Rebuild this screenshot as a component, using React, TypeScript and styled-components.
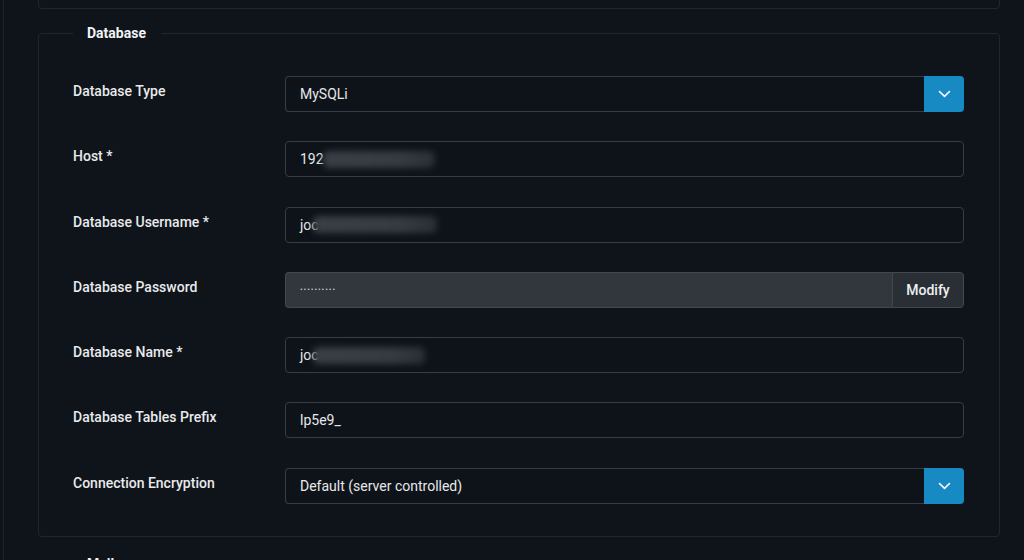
import React from "react";
import styled, { createGlobalStyle } from "styled-components";

const GlobalStyle = createGlobalStyle`
  html, body {
    margin: 0;
    padding: 0;
    background: #0f141a;
    overflow: hidden;
  }
  body {
    font-family: Roboto, "Liberation Sans", Arial, sans-serif;
    color: #e6e8ea;
  }
`;

type Field = {
  label: string;
  kind: "select" | "text" | "password";
  value: string;
  blur?: number;
  overlap?: number;
};

const fields: Field[] = [
  { label: "Database Type", kind: "select", value: "MySQLi" },
  { label: "Host *", kind: "text", value: "192", blur: 112 },
  { label: "Database Username *", kind: "text", value: "joc", blur: 124, overlap: 6 },
  { label: "Database Password", kind: "password", value: "••••••••••" },
  { label: "Database Name *", kind: "text", value: "joc", blur: 112, overlap: 6 },
  { label: "Database Tables Prefix", kind: "text", value: "lp5e9_" },
  { label: "Connection Encryption", kind: "select", value: "Default (server controlled)" },
];

const Chevron = () => (
  <svg width="13" height="8" viewBox="0 0 13 8" fill="none">
    <path d="M1.5 1.5L6.5 6.3L11.5 1.5" stroke="#fff" strokeWidth="1.6" strokeLinecap="round" strokeLinejoin="round" />
  </svg>
);

export default function App() {
  return (
    <>
      <GlobalStyle />
      <Page>
        <PrevFieldset />
        <Fieldset>
          <Legend>Database</Legend>
          <Grid>
            {fields.map((f) => (
              <React.Fragment key={f.label}>
                <Label>{f.label}</Label>
                {f.kind === "select" && (
                  <Group>
                    <Control $joined>{f.value}</Control>
                    <DropButton>
                      <Chevron />
                    </DropButton>
                  </Group>
                )}
                {f.kind === "text" && (
                  <Control>
                    {f.value}
                    {f.blur ? (
                      <Blur style={{ width: f.blur, marginLeft: -(f.overlap ?? 1) }} />
                    ) : null}
                  </Control>
                )}
                {f.kind === "password" && (
                  <Group>
                    <Control $joined $disabled>
                      <Dots>{f.value}</Dots>
                    </Control>
                    <ModifyButton>Modify</ModifyButton>
                  </Group>
                )}
              </React.Fragment>
            ))}
          </Grid>
        </Fieldset>
        <Fieldset $next>
          <Legend>Mail</Legend>
          <Spacer />
        </Fieldset>
      </Page>
    </>
  );
}

const Page = styled.div`
  display: flow-root;
  margin-left: 3px;
  border-left: 1px solid #1b222a;
  padding: 0 24px 0 34px;
  height: 100vh;
  overflow: hidden;
  box-sizing: border-box;
`;

const PrevFieldset = styled.div`
  margin-top: -32px;
  height: 41px;
  border: 1px solid #1f262e;
  border-radius: 4px;
  box-sizing: border-box;
`;

const Fieldset = styled.fieldset<{ $next?: boolean }>`
  margin: ${(p) => (p.$next ? "19px 0 0" : "16px 0 0")};
  padding: 0 35px 32px 34px;
  border: 1px solid #1f262e;
  border-radius: 4px;
  min-width: 0;
`;

const Legend = styled.legend`
  padding: 0 15px 0 14px;
  font-size: 14px;
  line-height: 16px;
  font-weight: 700;
  color: #f1f3f5;
`;

const Spacer = styled.div`
  height: 60px;
`;

const Grid = styled.div`
  display: grid;
  grid-template-columns: 212px 1fr;
  row-gap: 29.3px;
  padding-top: 35px;
`;

const Label = styled.div`
  font-size: 14px;
  line-height: 20px;
  font-weight: 500;
  color: #e8eaec;
  padding-top: 5px;
`;

const Group = styled.div`
  display: flex;
  height: 36px;
`;

const Control = styled.div<{ $joined?: boolean; $disabled?: boolean }>`
  flex: 1;
  display: flex;
  align-items: center;
  height: 36px;
  box-sizing: border-box;
  padding: 0 14px;
  font-size: 14px;
  color: #e6e8ea;
  background: ${(p) => (p.$disabled ? "#31373d" : "#0e1319")};
  border: 1px solid ${(p) => (p.$disabled ? "#41484f" : "#363d45")};
  border-radius: ${(p) => (p.$joined ? "4px 0 0 4px" : "4px")};
  ${(p) => (p.$joined ? "border-right: none;" : "")}
`;

const Blur = styled.span`
  display: inline-block;
  height: 17px;
  background: linear-gradient(to right, #3a3f46 0%, #363b42 70%, #2a2f36 100%);
  filter: blur(3px);
  border-radius: 6px;
`;

const Dots = styled.span`
  font-size: 8px;
  letter-spacing: 0.9px;
  color: #c8ccd0;
`;

const DropButton = styled.div`
  width: 40px;
  display: flex;
  align-items: center;
  justify-content: center;
  background: #1789c3;
  border-radius: 0 4px 4px 0;
`;

const ModifyButton = styled.div`
  width: 72px;
  display: flex;
  align-items: center;
  justify-content: center;
  box-sizing: border-box;
  font-size: 14px;
  font-weight: 500;
  color: #eef0f2;
  background: #2a2f35;
  border: 1px solid #41484f;
  border-radius: 0 4px 4px 0;
`;
